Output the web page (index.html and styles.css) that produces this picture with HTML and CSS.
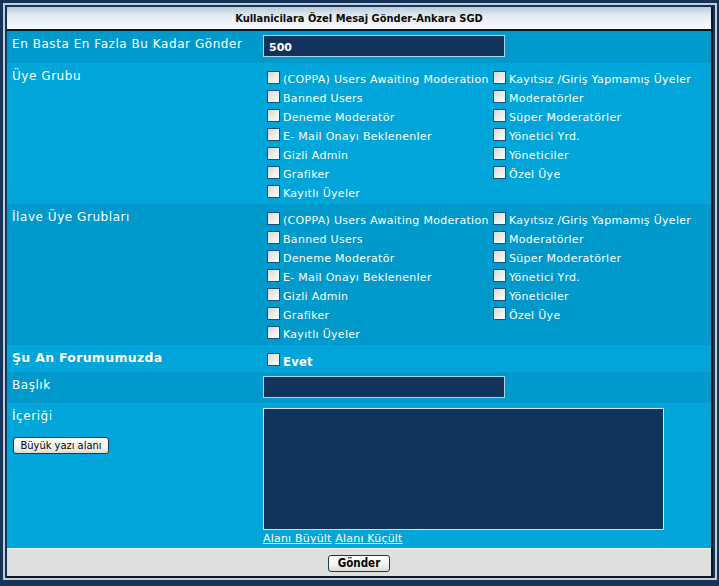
FILE: index.html
```html
<!DOCTYPE html>
<html lang="tr">
<head>
<meta charset="utf-8">
<title>Kullanicilara Özel Mesaj Gönder</title>
<link rel="stylesheet" href="styles.css">
</head>
<body>
<div class="frame">
  <table class="form">
    <tr><th colspan="2" class="head">Kullanicilara Özel Mesaj Gönder-Ankara SGD</th></tr>
    <tr class="dark r-input r-first">
      <td class="lab">En Basta En Fazla Bu Kadar Gönder</td>
      <td class="val"><input class="txt bold" type="text" value="500"></td>
    </tr>
    <tr class="light r-checks">
      <td class="lab">Üye Grubu</td>
      <td class="val">
        <div class="checks">
          <div class="col">
            <label class="chk"><input type="checkbox">(COPPA) Users Awaiting Moderation</label>
            <label class="chk"><input type="checkbox">Banned Users</label>
            <label class="chk"><input type="checkbox">Deneme Moderatör</label>
            <label class="chk"><input type="checkbox">E- Mail Onayı Beklenenler</label>
            <label class="chk"><input type="checkbox">Gizli Admin</label>
            <label class="chk"><input type="checkbox">Grafiker</label>
            <label class="chk"><input type="checkbox">Kayıtlı Üyeler</label>
          </div>
          <div class="col">
            <label class="chk"><input type="checkbox">Kayıtsız /Giriş Yapmamış Üyeler</label>
            <label class="chk"><input type="checkbox">Moderatörler</label>
            <label class="chk"><input type="checkbox">Süper Moderatörler</label>
            <label class="chk"><input type="checkbox">Yönetici Yrd.</label>
            <label class="chk"><input type="checkbox">Yöneticiler</label>
            <label class="chk"><input type="checkbox">Özel Üye</label>
          </div>
        </div>
      </td>
    </tr>
    <tr class="dark r-checks">
      <td class="lab">İlave Üye Grubları</td>
      <td class="val">
        <div class="checks">
          <div class="col">
            <label class="chk"><input type="checkbox">(COPPA) Users Awaiting Moderation</label>
            <label class="chk"><input type="checkbox">Banned Users</label>
            <label class="chk"><input type="checkbox">Deneme Moderatör</label>
            <label class="chk"><input type="checkbox">E- Mail Onayı Beklenenler</label>
            <label class="chk"><input type="checkbox">Gizli Admin</label>
            <label class="chk"><input type="checkbox">Grafiker</label>
            <label class="chk"><input type="checkbox">Kayıtlı Üyeler</label>
          </div>
          <div class="col">
            <label class="chk"><input type="checkbox">Kayıtsız /Giriş Yapmamış Üyeler</label>
            <label class="chk"><input type="checkbox">Moderatörler</label>
            <label class="chk"><input type="checkbox">Süper Moderatörler</label>
            <label class="chk"><input type="checkbox">Yönetici Yrd.</label>
            <label class="chk"><input type="checkbox">Yöneticiler</label>
            <label class="chk"><input type="checkbox">Özel Üye</label>
          </div>
        </div>
      </td>
    </tr>
    <tr class="light r-online">
      <td class="lab strong">Şu An Forumumuzda</td>
      <td class="val"><label class="chk evet"><input type="checkbox">Evet</label></td>
    </tr>
    <tr class="dark r-input">
      <td class="lab">Başlık</td>
      <td class="val"><input class="txt" type="text"></td>
    </tr>
    <tr class="light r-body">
      <td class="lab">
        <div>İçeriği</div>
        <button class="btn big" type="button">Büyük yazı alanı</button>
      </td>
      <td class="val">
        <textarea class="area"></textarea>
        <div class="links"><a href="#">Alanı Büyült</a> <a href="#">Alanı Küçült</a></div>
      </td>
    </tr>
    <tr class="foot">
      <td colspan="2"><button class="btn send" type="button">Gönder</button></td>
    </tr>
  </table>
</div>
</body>
</html>
```

FILE: styles.css
```css
html, body {
  margin: 0;
  padding: 0;
}
body {
  background: #15345a;
  font-family: "DejaVu Sans", Verdana, sans-serif;
  color: #ffffff;
  height: 586px;
  overflow: hidden;
}
.frame {
  margin: 3px 0 0 3px;
  width: 708px;
  border: 2px solid #c4ccd4;
  padding: 2px 0 0 2px;
  background: #15345a;
}
.form {
  width: 706px;
  border-collapse: collapse;
  border-spacing: 0;
  border-right: 2px solid #0a1624;
  border-bottom: 2px solid #0a1624;
}
.head {
  height: 22px;
  padding: 0;
  font-family: "DejaVu Sans Condensed", "DejaVu Sans", sans-serif;
  font-weight: bold;
  font-size: 11px;
  color: #0a0a0a;
  text-align: center;
  background: linear-gradient(#b8ccd8, #e6edf2 45%, #f8fafb);
  border-bottom: 2px solid #0c1420;
}
.dark { background: #0099cc; }
.light { background: #00a6da; }
td {
  padding: 4px 5px 0 5px;
  vertical-align: top;
}
.lab {
  width: 241px;
  font-size: 12px;
  line-height: 18px;
  letter-spacing: 0.55px;
}
.lab.strong {
  font-weight: bold;
  font-size: 12.5px;
  letter-spacing: 0.3px;
}
.r-input td { padding-bottom: 5px; }
.r-first td { padding-bottom: 6px; }
.r-checks td { padding-bottom: 1px; }
.r-online td { padding-bottom: 0; }
.r-body td { padding-bottom: 2px; }
.txt {
  display: block;
  box-sizing: border-box;
  width: 242px;
  height: 22px;
  margin: 0;
  padding: 2px 5px 0;
  background: #12345c;
  border: 1px solid #a8d4ec;
  color: #ffffff;
  font-family: "DejaVu Sans", sans-serif;
  font-size: 11px;
}
.txt.bold { font-weight: bold; }
.checks {
  display: grid;
  grid-template-columns: 226px auto;
  margin-top: 3px;
}
.col {
  display: flex;
  flex-direction: column;
}
.chk {
  display: flex;
  align-items: center;
  height: 19px;
  font-size: 11px;
  letter-spacing: 0.3px;
  white-space: nowrap;
}
.chk input {
  appearance: none;
  -webkit-appearance: none;
  box-sizing: border-box;
  width: 13px;
  height: 13px;
  margin: -4px 3px 0 4px;
  border: 1px solid #1c4f7c;
  background: linear-gradient(135deg, #d6d6d0, #f4f4f2 70%, #ffffff);
  flex: none;
}
.evet {
  font-weight: bold;
  font-size: 11.5px;
  margin-top: 3px;
  height: 20px;
}
.evet input { margin-top: -6px; }
.btn {
  font-family: "DejaVu Sans Condensed", "DejaVu Sans", sans-serif;
  font-size: 11px;
  color: #000000;
  background: linear-gradient(#ffffff, #f2f2ee 60%, #dcdcd4);
  border: 1px solid #1e3550;
  border-radius: 3px;
  padding: 0;
  height: 17px;
  line-height: 15px;
}
.big {
  display: block;
  width: 96px;
  margin: 12px 0 0 1px;
}
.area {
  display: block;
  box-sizing: border-box;
  width: 401px;
  height: 122px;
  margin: 1px 0 0;
  background: #12345c;
  border: 1px solid #cfe8f6;
  resize: none;
}
.links {
  margin-top: 2px;
  font-size: 11px;
  line-height: 14px;
  letter-spacing: 0.2px;
}
.links a { color: #ffffff; }
.foot td {
  background: #dedede;
  box-shadow: inset 0 1px 0 #f4f4f4;
  text-align: center;
  height: 17px;
  padding: 7px 0 4px;
}
.send {
  display: block;
  margin: 0 auto;
  width: 62px;
  font-weight: bold;
  font-size: 11.5px;
}
```
